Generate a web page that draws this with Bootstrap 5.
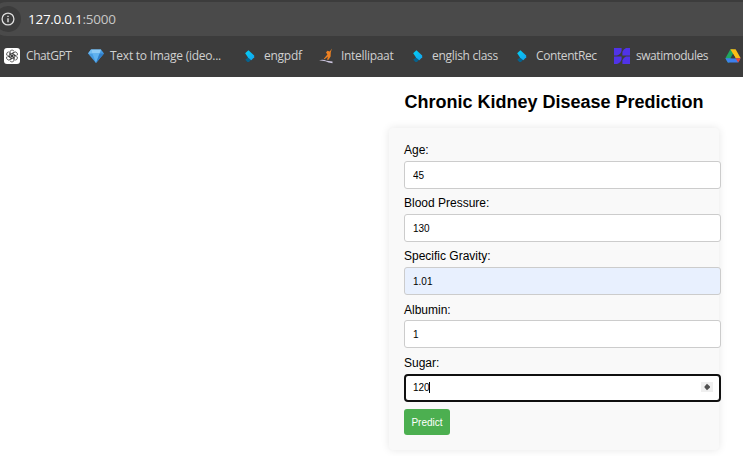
<!DOCTYPE html>
<html lang="en">
<head>
<meta charset="utf-8">
<meta name="viewport" content="width=device-width, initial-scale=1">
<title>Chronic Kidney Disease Prediction</title>
<link href="https://cdn.jsdelivr.net/npm/bootstrap@5.3.0/dist/css/bootstrap.min.css" rel="stylesheet">
<style>
body{font-family:"Liberation Sans",Arial,sans-serif;font-size:12px;color:#000;background:#fff;height:456px;overflow:hidden}
.browser{background:#3c3c3c;height:77px;padding-top:2px;font-family:"Open Sans","Noto Sans",sans-serif;overflow:hidden}
.address{background:#4a4a4a;height:34px;margin-left:-10px;border-radius:17px 0 0 17px;padding-left:5px}
.info-dot{width:26px;height:26px;border-radius:50%;background:#3c3c3c}
.url{font-size:13.5px;line-height:18px;margin-left:7px;color:#c7c7c7;letter-spacing:-.27px;white-space:nowrap}
.url b{font-weight:400;color:#fff}
.bookmarks{height:40px;padding-left:4px;color:#d0d0d0;font-size:12px;line-height:16px;white-space:nowrap}
.bookmark{flex:none;gap:6px}
.bookmark svg{flex:none}
.w1{width:84px;letter-spacing:-.42px}.w2{width:154px;letter-spacing:-.25px}.w3{width:77px;letter-spacing:-.25px}
.w4{width:91px;letter-spacing:-.3px}.w5{width:104px;letter-spacing:-.3px}.w6{width:100px;letter-spacing:-.4px}.w7{width:111px;letter-spacing:-.45px}
.page{width:330.5px;margin-left:388.5px}
.page h1{font-size:18px;line-height:22px;font-weight:700;margin:14px 0 14.5px;padding-left:.5px;white-space:nowrap;text-align:center}
.panel{background:#f9f9f9;border-radius:4px;box-shadow:0 0 8px rgba(0,0,0,.1);height:322.5px;padding:15.5px 15.5px 0}
.field{height:53.2px}
.field:nth-child(4){height:53.4px}
.field:nth-child(3){height:53px}
.field label{display:block;height:18px;line-height:14px;font-size:12px}
.field:nth-child(4) label{padding-top:1px}
.field .form-control{width:317px;height:28px;min-height:0;padding:0 8px;font-size:10px;line-height:26px;border:1px solid #ccc;border-radius:3px;color:#000;background:#fff;box-shadow:none}
.field .filled{background:#e8f0fe}
.field .active-input{border:2px solid #101010;border-radius:4px;padding:0 7px}
.input-wrap{width:317px}
.caret{left:25px;top:8px;width:1px;height:11px;background:#000}
.spinner{right:8px;top:8px;width:12px;height:10px}
.predict{display:block;width:46px;height:26px;padding:1px 0 0;background:#4caf50;color:#fff;border:0;border-radius:3px;font-size:10px;line-height:25px}
.predict:hover{background:#45a049;color:#fff}
</style>
</head>
<body>
<svg width="0" height="0" class="position-absolute" aria-hidden="true">
<defs>
<linearGradient id="blue" x1="0" y1="0" x2="1" y2="1"><stop stop-color="#00d3f5"/><stop offset="1" stop-color="#16a0ee"/></linearGradient>
<symbol id="chevron" viewBox="0 0 16 16"><path d="M3.2 11.8 6.5 9 9.6 11.2 7 14H5.4Z" fill="#07628c"/><path d="M3.2 5.2 6.4 2.2 12.2 7.6V9.2L9.3 12.2 6 9.4Z" fill="url(#blue)"/></symbol>
</defs>
</svg>
<header class="browser">
<div class="address d-flex align-items-center">
<span class="info-dot d-flex align-items-center justify-content-center">
<svg width="14" height="14" viewBox="0 0 14 14" fill="none" stroke="#dedede"><circle cx="7" cy="7" r="5.9" stroke-width="1.3"/><path d="M7 6.3v4M7 3.7v1.4" stroke-width="1.4"/></svg>
</span>
<span class="url"><b>127.0.0.1</b>:5000</span>
</div>
<nav class="bookmarks d-flex align-items-center">
<span class="bookmark w1 d-flex align-items-center">
<svg width="16" height="16" viewBox="0 0 24 24"><rect width="24" height="24" rx="4.5" fill="#fff"/><g transform="translate(12 12)" fill="none" stroke="#333" stroke-width="1.15"><g id="petal"><path d="M-3.4 2V-5.2A3.5 3.5 0 0 1 2.9-7.4M3.4-4.9-.1-2.9V1.2"/></g><use href="#petal" transform="rotate(60)"/><use href="#petal" transform="rotate(120)"/><use href="#petal" transform="rotate(180)"/><use href="#petal" transform="rotate(240)"/><use href="#petal" transform="rotate(300)"/></g></svg>
<span>ChatGPT</span></span>
<span class="bookmark w2 d-flex align-items-center">
<svg width="16" height="16" viewBox="0 0 16 16"><path d="M3 1.5H13L16 5.5 8 15 0 5.5Z" fill="#459be3"/><path d="M3 1.5 4.4 5.5H0Z" fill="#72bdf3"/><path d="M3 1.5H13L11.6 5.5H4.4Z" fill="#8dcbf7"/><path d="M4.4 5.5H11.6L8 15Z" fill="#60b2f0"/><path d="M11.6 5.5H16L8 15Z" fill="#2f7dc8"/></svg>
<span>Text to Image (ideo...</span></span>
<span class="bookmark w3 d-flex align-items-center"><svg width="16" height="16"><use href="#chevron"/></svg><span>engpdf</span></span>
<span class="bookmark w4 d-flex align-items-center">
<svg width="16" height="16" viewBox="0 0 16 16"><path d="M12.9.5 11.8 4.2 11.6 8.5 9.5 11.8H8L9 8.5 5.5 11.2 4.8 10.7 8.4 6.5 7 4.5 8.4 2.8 10.8 3.5Z" fill="#ed8122"/><path d="M0 12.2Q4 10.9 7.5 12.7L13.5 13.4V15.2Q9 14.9 6.5 13.2Z" fill="#ccc5df"/></svg>
<span>Intellipaat</span></span>
<span class="bookmark w5 d-flex align-items-center"><svg width="16" height="16"><use href="#chevron"/></svg><span>english class</span></span>
<span class="bookmark w6 d-flex align-items-center"><svg width="16" height="16"><use href="#chevron"/></svg><span>ContentRec</span></span>
<span class="bookmark w7 d-flex align-items-center">
<svg width="16" height="16" viewBox="0 0 16 16" fill="#5033e8"><path d="M0 0H7.6V2.8Q6.8 6.3 3 7.6H0ZM8.4 3.8Q9.4 1.2 12 0H16V7.6H8.4ZM0 8.4H7.6V11.2Q6.8 14.7 3 16H0ZM8.4 12.2Q9.4 9.6 12 8.4H16V16H8.4Z"/></svg>
<span>swatimodules</span></span>
<span class="bookmark d-flex align-items-center">
<svg width="16" height="16" viewBox="0 0 16 16"><path d="M5.4 1.2H8L10 4.7 5.1 13.2 3.8 14.9 2.5 14 .4 10.3Z" fill="#20a660"/><path d="M5.4 1.2H10.6L15.6 10H10.4Z" fill="#fcbd16"/><path d="M.4 10.3H15.6L13.2 14.6H2.8Z" fill="#3d80ef"/><path d="M10.4 10.3H15.6L13.2 14.6Z" fill="#ea4335"/><path d="M8 5.7 10.6 10.3H5.4Z" fill="#3c3c3c"/></svg></span>
</nav>
</header>
<main class="page">
<h1>Chronic Kidney Disease Prediction</h1>
<form class="panel">
<div class="field"><label for="age">Age:</label><input id="age" class="form-control" value="45"></div>
<div class="field"><label for="bp">Blood Pressure:</label><input id="bp" class="form-control" value="130"></div>
<div class="field"><label for="sg">Specific Gravity:</label><input id="sg" class="form-control filled" value="1.01"></div>
<div class="field"><label for="al">Albumin:</label><input id="al" class="form-control" value="1"></div>
<div class="field"><label for="su">Sugar:</label>
<div class="input-wrap position-relative"><input id="su" class="form-control active-input" value="120"><span class="caret position-absolute"></span>
<svg class="spinner position-absolute" viewBox="0 0 12 10"><rect width="12" height="10" fill="#efefef"/><path d="M6 1.8 9 4.4V5.6L6 8.2 3.5 5.6V4.4Z" fill="#505050"/></svg></div></div>
<button type="button" class="btn predict">Predict</button>
</form>
</main>
<script src="https://cdn.jsdelivr.net/npm/bootstrap@5.3.0/dist/js/bootstrap.bundle.min.js"></script>
</body>
</html>
